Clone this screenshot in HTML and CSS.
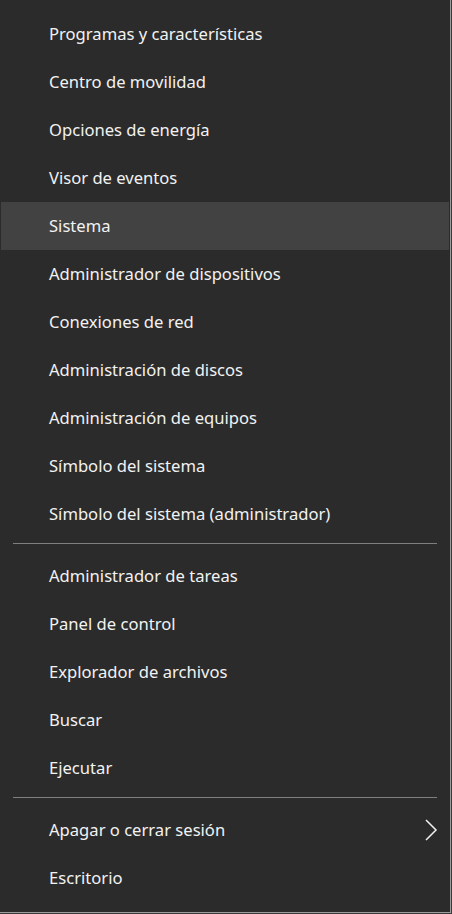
FILE: index.html
```html
<!DOCTYPE html>
<html lang="es">
<head>
<meta charset="utf-8">
<link rel="stylesheet" href="styles.css">
</head>
<body>
<div class="menu">
  <div class="group">
    <div class="item">Programas y características</div>
    <div class="item">Centro de movilidad</div>
    <div class="item">Opciones de energía</div>
    <div class="item">Visor de eventos</div>
    <div class="item hover">Sistema</div>
    <div class="item">Administrador de dispositivos</div>
    <div class="item">Conexiones de red</div>
    <div class="item">Administración de discos</div>
    <div class="item">Administración de equipos</div>
    <div class="item">Símbolo del sistema</div>
    <div class="item">Símbolo del sistema (administrador)</div>
  </div>
  <div class="sep"></div>
  <div class="group">
    <div class="item">Administrador de tareas</div>
    <div class="item">Panel de control</div>
    <div class="item">Explorador de archivos</div>
    <div class="item">Buscar</div>
    <div class="item">Ejecutar</div>
  </div>
  <div class="sep"></div>
  <div class="group">
    <div class="item sub"><span>Apagar o cerrar sesión</span>
      <svg class="chev" width="14" height="24" viewBox="0 0 14 24"><path d="M2 2 L12 12 L2 22" fill="none" stroke="#f0f0f0" stroke-width="1.5"/></svg>
    </div>
    <div class="item">Escritorio</div>
  </div>
</div>
</body>
</html>
```
FILE: styles.css
```css
html, body {
  margin: 0;
  padding: 0;
  background: #3a3a3a;
}
body {
  width: 452px;
  height: 914px;
  overflow: hidden;
}
.menu {
  width: 451px;
  height: 913px;
  box-sizing: border-box;
  background: #2b2b2b;
  border-right: 1px solid #9c9c9c;
  border-bottom: 1px solid #9c9c9c;
  padding-top: 10px;
  font-family: "Noto Sans", "Open Sans", sans-serif;
  font-size: 16.6px;
  color: #f2f2f2;
}
.group {
  display: flex;
  flex-direction: column;
}
.item {
  height: 48px;
  box-sizing: border-box;
  display: flex;
  align-items: center;
  margin: 0 1px;
  padding-left: 48px;
  padding-bottom: 2px;
}
.item.hover {
  background: #424242;
}
.sep {
  height: 1px;
  background: #7f7f7f;
  margin: 5px 13px 8px 13px;
}
.sub {
  justify-content: space-between;
  padding-right: 11px;
}
.chev {
  display: block;
  margin-top: 2px;
}
```
